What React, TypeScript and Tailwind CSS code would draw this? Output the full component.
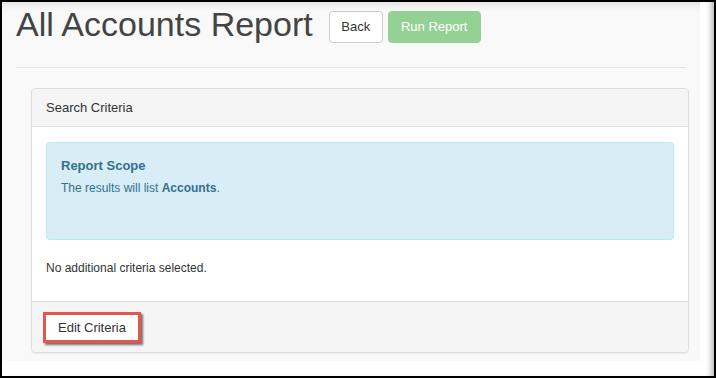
import React from 'react';

export default function App() {
  return (
    <div
      className="w-[716px] h-[378px] border-2 border-black bg-white overflow-hidden shadow-[inset_-7px_0_6px_-5px_rgba(0,0,0,0.35)]"
      style={{ fontFamily: '"Liberation Sans", Arial, sans-serif' }}
    >
      <div className="w-[698px] h-[359px] bg-[#f9f9f9] px-[14px] pt-[5px] shadow-[inset_0_8px_8px_-6px_rgba(0,0,0,0.12)]">
        <div className="flex items-start">
          <h1 className="text-[34px] leading-[34px] text-[#444] whitespace-nowrap">All Accounts Report</h1>
          <button className="ml-[16px] mt-[4px] h-[32px] w-[54px] rounded-[4px] border border-[#cccccc] bg-white text-[13px] text-[#333]">
            Back
          </button>
          <button className="ml-[5px] mt-[4px] h-[32px] w-[93px] rounded-[4px] border border-[#93d093] bg-[#94d194] text-[13px] text-white">
            Run Report
          </button>
        </div>

        <div className="mt-[24px] border-t border-[#e5e5e5]" />

        <div className="ml-[15px] mt-[20px] w-[658px] rounded-[4px] border border-[#dddddd] bg-white shadow-[0_1px_1px_rgba(0,0,0,0.05)]">
          <div className="h-[38px] flex items-center px-[14px] bg-[#f5f5f5] border-b border-[#dddddd] rounded-t-[4px] text-[13px] text-[#333]">
            Search Criteria
          </div>

          <div className="px-[14px] pt-[15px] pb-[24px]">
            <div className="h-[98px] rounded-[4px] border border-[#bce8f1] bg-[#d9edf7] px-[14px] pt-[14px] text-[#31708f]">
              <div className="text-[13px] leading-[18px] font-bold">Report Scope</div>
              <div className="mt-[5px] text-[12px] leading-[17px]">
                The results will list <span className="font-bold">Accounts</span>.
              </div>
            </div>
            <div className="mt-[20px] text-[12px] leading-[17px] text-[#333]">No additional criteria selected.</div>
          </div>

          <div className="h-[51px] border-t border-[#dddddd] bg-[#f5f5f5] rounded-b-[4px] px-[11px] pt-[10px]">
            <button className="h-[31px] px-[12px] border-[3px] border-[#e8564b] bg-white text-[13px] text-[#333] shadow-[2px_2px_2px_rgba(0,0,0,0.55)]">
              Edit Criteria
            </button>
          </div>
        </div>
      </div>
    </div>
  );
}
